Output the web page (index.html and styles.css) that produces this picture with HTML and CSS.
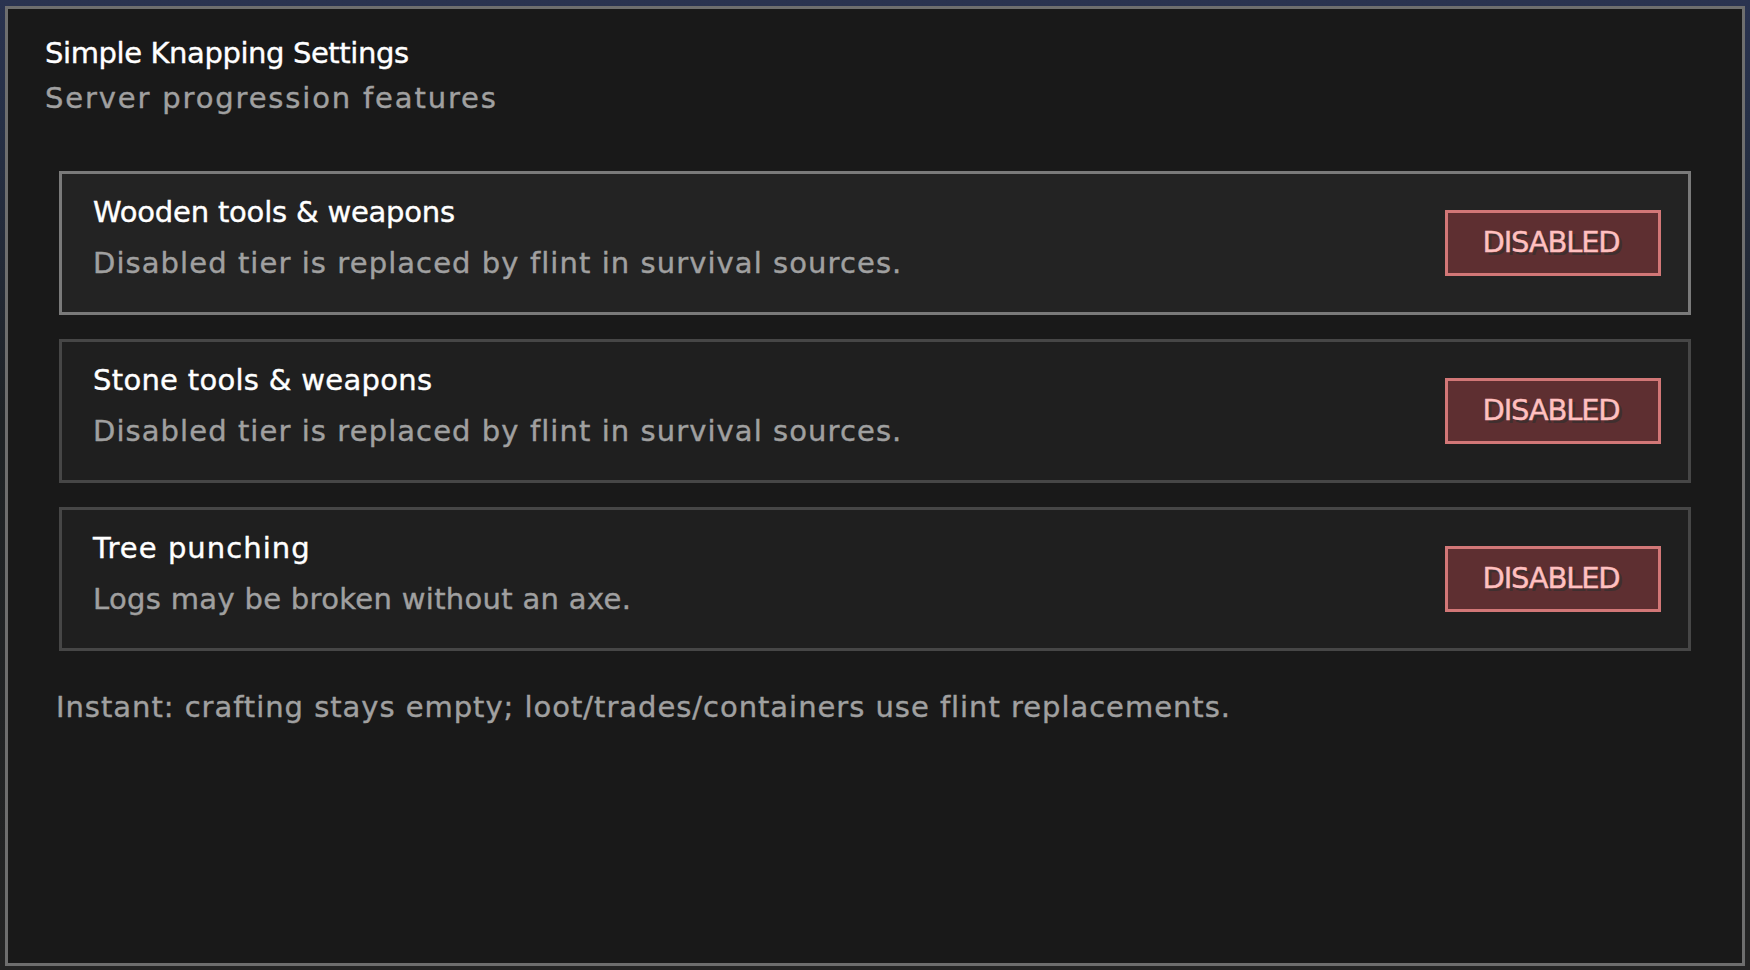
FILE: index.html
```html
<!DOCTYPE html>
<html lang="en">
<head>
<meta charset="utf-8">
<title>Simple Knapping Settings</title>
<link rel="stylesheet" href="styles.css">
</head>
<body>
<div class="screen">
  <div class="panel">
    <header class="head">
      <div class="title">Simple Knapping Settings</div>
      <div class="subtitle">Server progression features</div>
    </header>
    <div class="list">
      <div class="row row-hover">
        <div class="info">
          <div class="row-title ls-wood">Wooden tools &amp; weapons</div>
          <div class="row-desc ls-tier">Disabled tier is replaced by flint in survival sources.</div>
        </div>
        <div class="toggle">DISABLED</div>
      </div>
      <div class="row">
        <div class="info">
          <div class="row-title ls-stone">Stone tools &amp; weapons</div>
          <div class="row-desc ls-tier">Disabled tier is replaced by flint in survival sources.</div>
        </div>
        <div class="toggle">DISABLED</div>
      </div>
      <div class="row">
        <div class="info">
          <div class="row-title ls-tree">Tree punching</div>
          <div class="row-desc ls-logs">Logs may be broken without an axe.</div>
        </div>
        <div class="toggle">DISABLED</div>
      </div>
    </div>
    <p class="note">Instant: crafting stays empty; loot/trades/containers use flint replacements.</p>
  </div>
</div>
</body>
</html>
```
FILE: styles.css
```css
* { box-sizing: border-box; }

html, body {
  margin: 0;
  padding: 0;
}

body {
  width: 1750px;
  height: 970px;
  overflow: hidden;
  background: linear-gradient(to bottom, #2a3350 0px, #263047 120px, #1f2326 420px, #242424 970px);
  font-family: "DejaVu Sans", "Liberation Sans", sans-serif;
  font-size: 29px;
  line-height: 30px;
  -webkit-text-stroke: 0.4px currentColor;
}

.screen {
  padding: 6px 5px 4px 5px;
}

.panel {
  width: 1740px;
  height: 960px;
  background: #191919;
  border: 3px solid #6e6e6e;
  padding-top: 29px;
}

.head {
  padding-left: 37px;
}

.title {
  color: #ffffff;
  letter-spacing: -0.4px;
  white-space: nowrap;
}

.subtitle {
  margin-top: 15px;
  color: #a0a0a0;
  letter-spacing: 1.85px;
  white-space: nowrap;
}

.list {
  margin-top: 58px;
  padding: 0 51px;
  display: flex;
  flex-direction: column;
  gap: 24px;
}

.row {
  height: 144px;
  border: 3px solid #464646;
  background: #1f1f1f;
  display: flex;
  align-items: center;
  justify-content: space-between;
  padding: 0 27px 0 31px;
}

.row-hover {
  border-color: #7a7a7a;
  background: #232323;
}

.info {
  align-self: flex-start;
  padding-top: 23px;
}

.row-title {
  color: #ffffff;
  white-space: nowrap;
}

.row-desc {
  margin-top: 21px;
  color: #a0a0a0;
  white-space: nowrap;
}

.ls-wood { letter-spacing: -0.2px; }
.ls-stone { letter-spacing: 0.3px; }
.ls-tree { letter-spacing: 1.05px; }
.ls-tier { letter-spacing: 1.08px; }
.ls-logs { letter-spacing: 0.32px; }

.toggle {
  width: 216px;
  height: 66px;
  border: 3px solid #d27777;
  background: #5e2f31;
  color: #ffc0c0;
  text-shadow: 3px 3px 0 #3f2f2f;
  letter-spacing: -1.2px;
  display: flex;
  align-items: center;
  justify-content: center;
  padding: 0 4px 3px 0;
  white-space: nowrap;
}

.note {
  margin: 41px 0 0 0;
  padding-left: 48px;
  color: #a0a0a0;
  letter-spacing: 0.97px;
  white-space: nowrap;
}
```
